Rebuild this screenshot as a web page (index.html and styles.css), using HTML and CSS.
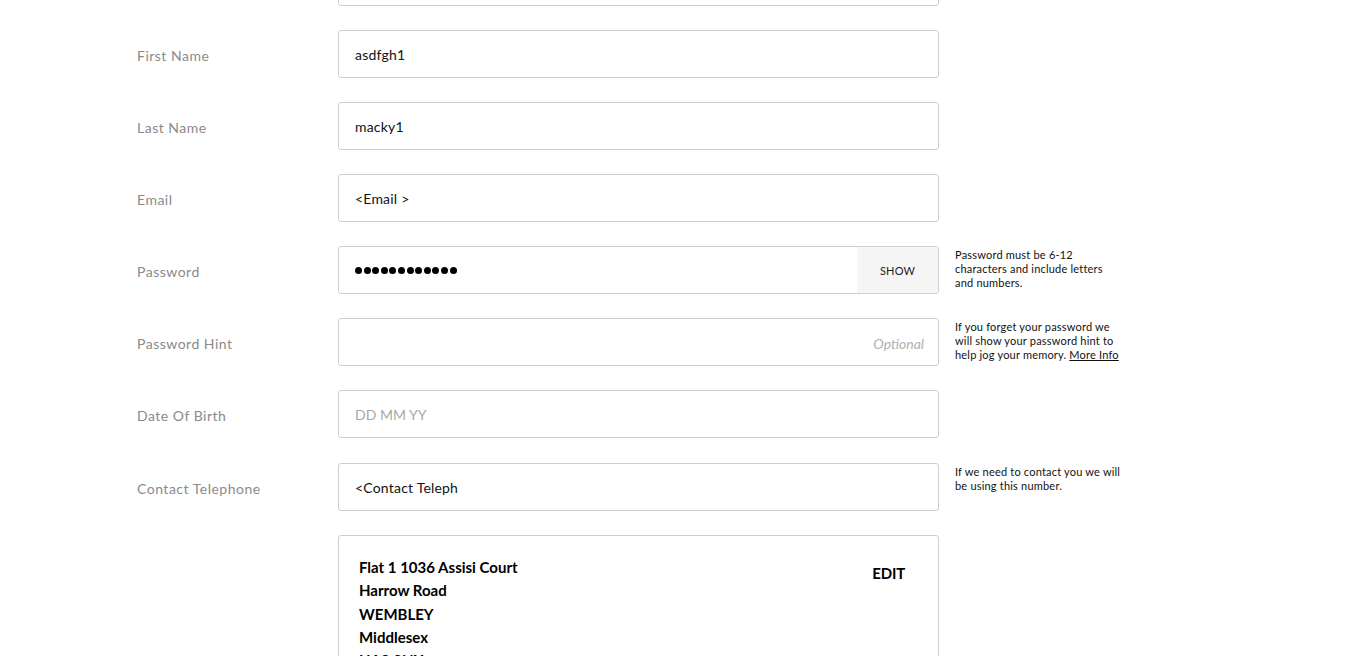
FILE: index.html
```html
<!DOCTYPE html>
<html>
<head>
<meta charset="utf-8">
<link rel="stylesheet" href="styles.css">
</head>
<body>
<div class="form">
  <div class="row">
    <div class="label"></div>
    <div class="field"><span class="value"></span></div>
    <div class="hint"></div>
  </div>
  <div class="row">
    <div class="label">First Name</div>
    <div class="field"><span class="value">asdfgh1</span></div>
    <div class="hint"></div>
  </div>
  <div class="row">
    <div class="label">Last Name</div>
    <div class="field"><span class="value">macky1</span></div>
    <div class="hint"></div>
  </div>
  <div class="row">
    <div class="label">Email</div>
    <div class="field"><span class="value">&lt;Email &gt;</span></div>
    <div class="hint"></div>
  </div>
  <div class="row">
    <div class="label">Password</div>
    <div class="field password">
      <span class="dots"><i></i><i></i><i></i><i></i><i></i><i></i><i></i><i></i><i></i><i></i><i></i><i></i></span>
      <span class="show">SHOW</span>
    </div>
    <div class="hint">Password must be 6-12<br>characters and include letters<br>and numbers.</div>
  </div>
  <div class="row">
    <div class="label">Password Hint</div>
    <div class="field optional"><span class="opt">Optional</span></div>
    <div class="hint">If you forget your password we<br>will show your password hint to<br>help jog your memory. <a href="#" class="more">More Info</a></div>
  </div>
  <div class="row">
    <div class="label">Date Of Birth</div>
    <div class="field"><span class="placeholder">DD MM YY</span></div>
    <div class="hint"></div>
  </div>
  <div class="row row-gap">
    <div class="label">Contact Telephone</div>
    <div class="field"><span class="value">&lt;Contact Teleph</span></div>
    <div class="hint">If we need to contact you we will<br>be using this number.</div>
  </div>
  <div class="row">
    <div class="label"></div>
    <div class="address">
      <div class="lines">
        <div>Flat 1 1036 Assisi Court</div>
        <div>Harrow Road</div>
        <div>WEMBLEY</div>
        <div>Middlesex</div>
        <div>HA9 0NX</div>
      </div>
      <div class="edit">EDIT</div>
    </div>
    <div class="hint"></div>
  </div>
</div>
</body>
</html>
```
FILE: styles.css
```css
html, body {
  margin: 0;
  padding: 0;
  background: #fff;
  overflow: hidden;
  height: 656px;
}
body {
  font-family: Lato, "Open Sans", sans-serif;
  color: #000;
}
.form {
  margin-top: -42px;
  padding-left: 137px;
  display: flex;
  flex-direction: column;
  gap: 24px;
}
.row {
  display: grid;
  grid-template-columns: 201px 601px 190px;
  align-items: start;
}
.row-gap {
  margin-top: 1px;
}
.label {
  font-size: 14px;
  color: #8a8a8a;
  height: 48px;
  line-height: 52px;
  letter-spacing: 0.5px;
}
.field {
  box-sizing: border-box;
  height: 48px;
  border: 1px solid #cfcfcf;
  border-radius: 3px;
  display: flex;
  align-items: center;
  padding-left: 16px;
  font-size: 14px;
  overflow: hidden;
}
.value {
  color: #111;
  letter-spacing: 0.2px;
}
.placeholder {
  color: #a8a8a8;
}
.optional {
  justify-content: flex-end;
  padding-right: 14px;
}
.opt {
  color: #b0b0b0;
  font-style: italic;
  font-size: 14px;
  padding-top: 2px;
}
.password {
  padding-right: 0;
  justify-content: space-between;
}
.dots {
  display: flex;
  gap: 1.6px;
  padding-top: 1px;
}
.dots i {
  display: block;
  width: 7px;
  height: 7px;
  border-radius: 50%;
  background: #000;
}
.show {
  align-self: stretch;
  width: 81px;
  background: #f5f5f5;
  display: flex;
  align-items: center;
  justify-content: center;
  font-size: 11px;
  color: #222;
  letter-spacing: 0.2px;
}
.hint {
  font-size: 11px;
  line-height: 14px;
  color: #111;
  padding-top: 2px;
  padding-left: 16px;
  white-space: nowrap;
  letter-spacing: 0.2px;
}
.more {
  color: #111;
  text-decoration: underline;
}
.address {
  box-sizing: border-box;
  border: 1px solid #cfcfcf;
  border-radius: 3px;
  height: 200px;
  padding: 20px 33px 0 20px;
  display: flex;
  justify-content: space-between;
  align-items: flex-start;
}
.lines {
  font-size: 15px;
  font-weight: 700;
  line-height: 23.3px;
  letter-spacing: 0px;
  color: #000;
}
.edit {
  font-size: 15px;
  font-weight: 700;
  padding-top: 8px;
  letter-spacing: -0.2px;
}
```
